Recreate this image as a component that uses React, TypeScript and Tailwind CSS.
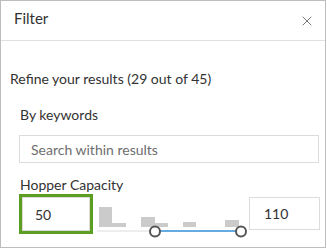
import { X } from "lucide-react";

const font = { fontFamily: "Lato, 'Open Sans', sans-serif" };

const bars = [
  { x: 6, w: 13, h: 20 },
  { x: 19, w: 14, h: 4 },
  { x: 48, w: 14, h: 10 },
  { x: 62, w: 13, h: 4 },
  { x: 90, w: 13, h: 5 },
  { x: 132, w: 14, h: 7 },
];

function RangeChart() {
  return (
    <svg width="156" height="46" viewBox="0 0 156 46" className="shrink-0">
      {bars.map((b) => (
        <rect key={b.x} x={b.x} y={33 - b.h} width={b.w} height={b.h} fill="#cbcbcb" />
      ))}
      <line x1="4" y1="37" x2="62" y2="37" stroke="#dcdcdc" strokeWidth="1" />
      <line x1="62" y1="37" x2="148" y2="37" stroke="#2f8fd6" strokeWidth="1.5" />
      <circle cx="62" cy="37.5" r="5" fill="#fff" stroke="#555" strokeWidth="2" />
      <circle cx="148" cy="37.5" r="5" fill="#fff" stroke="#555" strokeWidth="2" />
    </svg>
  );
}

export default function App() {
  return (
    <div className="w-[327px] h-[249px] bg-white" style={font}>
      <div className="w-[326px] h-[248px] border border-[#bdbdbd] flex flex-col text-[#323232]">
        {/* Header */}
        <div className="h-[40px] shrink-0 border-b border-[#e0e0e0] flex items-center justify-between pl-[13px] pr-[10px]">
          <span className="text-[15px] mb-[4px]">Filter</span>
          <X className="w-[16px] h-[16px] text-[#6e6e6e]" strokeWidth={1.4} />
        </div>

        {/* Body */}
        <div className="pl-[9px] pr-[5px] pt-[28px]">
          <p className="text-[14px] leading-[20px]">Refine your results (29 out of 45)</p>

          <div className="pl-[9px] pt-[16px]">
            <p className="text-[14px] leading-[20px] pl-[1px]">By keywords</p>
            <div className="mt-[10px] w-[300px] h-[28px] border border-[#dcdcdc] flex items-center pl-[11px]">
              <span className="text-[14px] text-[#6e6e6e]">Search within results</span>
            </div>

            <p className="text-[14px] leading-[18px] pl-[1px] mt-[13px]">Hopper Capacity</p>
            <div className="flex items-start h-[46px]">
              <div className="w-[74px] h-[40px] border-[3px] border-[#5c9e22] shrink-0">
                <div className="w-full h-full border border-[#dcdcdc] flex items-center pl-[12px] text-[14px]">
                  50
                </div>
              </div>
              <RangeChart />
              <div className="mt-[3px] w-[71px] h-[33px] border border-[#dcdcdc] flex items-center pl-[14px] text-[14px] shrink-0">
                110
              </div>
            </div>
          </div>
        </div>
      </div>
    </div>
  );
}
